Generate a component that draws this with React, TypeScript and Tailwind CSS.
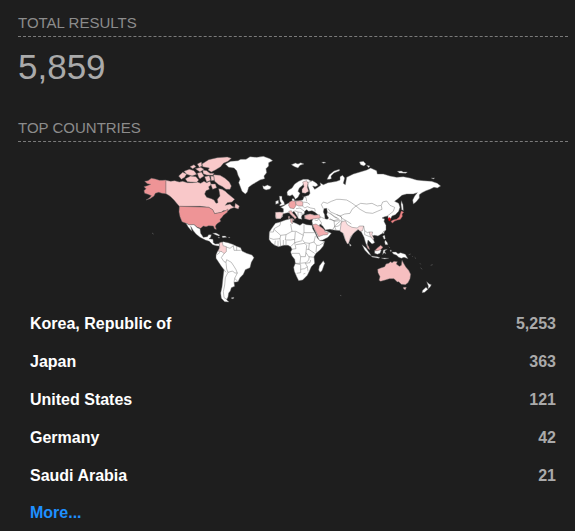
import React from "react";

interface CountryRow {
  name: string;
  count: number;
}

const TOTAL_RESULTS = 5859;

const countries: CountryRow[] = [
  { name: "Korea, Republic of", count: 5253 },
  { name: "Japan", count: 363 },
  { name: "United States", count: 121 },
  { name: "Germany", count: 42 },
  { name: "Saudi Arabia", count: 21 },
];

const SectionTitle: React.FC<{ children: React.ReactNode }> = ({ children }) => (
  <h2 className="border-b border-dashed border-[#7a7a7a] pb-0.5 text-[15px] leading-[22px] text-[#8c8c8c] uppercase">
    {children}
  </h2>
);

// Each group is drawn in its own local coordinates and moved into place
const WorldMap: React.FC = () => (
  <svg
    viewBox="0 0 918 465"
    className="mx-auto mt-2 block w-[306px] max-w-full"
    role="img"
    aria-label="Results by country"
    fill="#ffffff"
    stroke="#6a6a6a"
    strokeWidth="1.3"
    strokeLinejoin="round"
  >
    {/* North America */}
    <g>
      <path
        fill="#ee9496"
        d="M78 90L68 91 58 91 46 87 34 85 24 92 14 94 22 101 32 103 22 107 12 110 18 116 12 122 14 130 24 133 34 137 28 144 18 150 30 146 42 138 46 130 56 127 66 130 78 131Z"
      />
      <path
        fill="#f9c8c9"
        d="M78 91L92 94 104 92 118 96 128 94 142 98 158 98 172 96 182 100 192 94 200 98 210 94 214 104 206 110 208 118 198 122 194 132 200 142 214 146 222 150 228 160 234 158 232 148 240 138 238 126 236 116 246 118 256 124 262 130 272 138 284 148 276 156 262 158 256 166 270 162 276 168 284 172 272 176 264 182 250 182 244 187 224 191 218 179 206 172 180 169 118 169 110 160 102 150 92 140 86 136 78 131Z"
      />
      <path
        fill="#f9c8c9"
        d="M186 42L206 29 232 23 262 21 274 25 264 34 250 40 242 50 226 60 214 66 204 60 208 54 196 52 188 50ZM220 74L240 76 254 84 268 96 274 108 270 118 258 118 248 110 236 104 224 94ZM136 86L152 78 168 80 176 90 170 97 152 96 142 95ZM116 78L128 67 140 72 134 82 124 88ZM132 64L148 58 162 62 170 73 156 78 140 73ZM150 50L162 44 168 50 158 56ZM172 42L184 36 186 48 178 52ZM166 56L182 52 192 58 180 66ZM188 60L200 62 210 70 222 70 218 76 200 75 190 71ZM172 70L184 66 192 78 180 86 176 82ZM194 80L208 77 212 91 200 96ZM212 78L222 79 223 91 214 92ZM212 102L226 102 230 113 218 118Z"
      />
      <path fill="#f9c8c9" d="M286 160L298 168 295 177 284 173Z" />
      <path
        fill="#ee9496"
        d="M118 169L206 172 218 179 224 191 244 187 256 182 264 177 262 187 250 196 246 202 240 208 242 214 230 222 226 229 229 238 224 237 220 228 206 227 198 230 190 228 182 235 172 232 162 224 148 225 138 220 126 215 120 200 117 186Z"
      />
      <path d="M138 220L148 225 162 224 172 233 180 236 182 250 190 262 202 260 206 254 214 254 212 262 207 266 219 268 220 278 226 282 236 281 242 286 236 288 228 287 218 284 208 274 196 270 180 262 168 252 160 242 152 229 156 244 150 238 144 230Z" />
      <path d="M218 250L228 249 240 256 236 258 226 254ZM246 258L256 258 260 262 248 263ZM234 262L240 263 235 264ZM265 262L270 262 268 264Z" />
    </g>

    {/* Greenland and Iceland */}
    <g transform="translate(210 0)">
      <path d="M46 42L62 34 84 32 92 28 108 28 120 20 140 22 160 19 180 26 188 32 176 38 176 48 168 56 170 68 162 78 164 86 150 90 140 96 126 104 116 112 112 126 106 132 96 124 90 108 86 98 90 88 84 76 80 62 72 54 56 52Z" />
      <path d="M158 107L164 109 172 105 184 110 180 117 168 120 160 116Z" />
    </g>

    {/* Eurasian mainland */}
    <path d="M504 94L518 92 530 100 534 106 526 110 518 108 524 118 534 112 542 106 540 98 550 104 564 98 578 96 590 94 600 90 600 80 608 76 614 84 610 100 616 104 620 82 640 72 660 66 680 60 692 54 710 62 712 72 730 72 750 78 770 82 790 80 810 84 830 90 850 92 875 94 892 100 902 108 892 114 882 112 870 118 858 122 846 128 838 134 838 144 828 156 820 162 818 150 824 138 832 128 820 132 800 132 786 136 774 146 764 154 776 160 780 172 776 184 766 194 756 198 752 206 744 206 744 198 734 200 726 204 734 207 732 214 738 226 738 240 728 250 714 258 704 256 696 258 700 268 704 278 696 282 690 276 684 270 682 282 688 298 682 292 676 276 672 262 664 246 656 238 640 250 630 268 624 282 616 270 608 248 600 242 580 240 570 238 556 240 548 228 540 222 538 228 550 240 562 244 574 250 564 262 548 270 538 272 530 254 518 226 516 214 518 206 510 208 494 206 494 196 510 192 524 196 534 194 524 186 516 182 506 184 500 179 494 184 493 192 486 196 484 202 486 208 476 206 470 196 462 184 456 188 464 196 460 202 450 189 444 188 436 190 428 193 428 200 420 206 408 206 406 198 408 188 422 187 430 186 430 176 422 172 430 168 440 162 448 158 456 154 456 146 462 146 464 152 476 152 488 150 492 140 506 136 510 130 508 120 504 108Z" />

    {/* Europe */}
    <g transform="translate(390 0)">
      <path d="M60 138L52 136 51 126 56 120 66 114 74 102 86 94 100 88 114 88 124 94 112 98 104 97 98 106 88 114 84 124 90 130 84 142 76 148 72 140 67 134Z" />
      <path
        fill="#fbd3d4"
        d="M98 96L110 92 114 100 112 112 116 124 106 130 96 128 96 118 102 110Z"
      />
      <path d="M28 138L36 139 36 148 42 156 44 164 32 168 28 166 34 160 30 154ZM17 154L25 151 26 160 17 163Z" />
      <path d="M64 44L76 39 84 42 92 38 102 42 90 46 84 54 74 50ZM155 37L162 36 168 38 160 40Z" />
      <path d="M171 88L178 74 192 63 208 58 209 62 192 69 183 78 184 86 178 88Z" />
      <path fill="#f2a3a4" d="M58 156L66 152 76 154 78 166 72 176 60 174 56 166Z" />
      <path fill="#f7bebf" d="M77 154L90 152 99 156 98 168 86 168 78 164Z" />
      <path fill="#fbd6d7" d="M16 187L30 186 41 189 36 198 32 206 18 206Z" />
      <path
        fill="#f7bebf"
        d="M56 184L64 182 68 190 76 198 80 202 75 208 70 200 60 192ZM66 208L72 208 72 213ZM55 199L59 199 59 206 55 206Z"
      />
      <path fill="#f7b9ba" d="M104 197L120 192 134 196 148 194 151 204 134 206 118 210 106 206Z" />
      <path
        fill="none"
        d="M98 168L104 174 112 170 122 174 134 176 136 184 M100 156L112 158 120 164 M96 138L108 142 110 154 M78 176L90 174 98 180 104 184 M74 182L84 186 96 188 M84 186L84 200 M92 192L104 192"
      />
    </g>

    {/* Africa and the Middle East */}
    <g transform="translate(360 180)">
      <path d="M46 40L60 36 76 30 92 26 99 26 98 36 108 40 120 46 128 40 140 44 156 46 158 56 166 70 172 84 180 92 194 94 190 108 180 120 168 130 162 140 164 160 154 170 148 184 142 196 128 210 116 212 110 200 103 184 101 172 106 160 104 148 96 138 92 126 96 118 92 110 84 106 72 106 56 110 44 106 34 98 27 88 28 66 36 54Z" />
      <path d="M190 152L194 160 186 182 180 187 176 180 178 168Z" />
      <path fill="#f7b9ba" d="M92 26L98 26 97 42 92 36Z" />
      <path
        fill="#f4aeb0"
        d="M158 44L168 42 184 52 192 58 196 66 206 68 202 74 190 75 176 80 172 72 164 58Z"
      />
      <path
        fill="none"
        d="M28 66L40 66 42 56 60 46 62 36 M42 58L62 76 78 74 96 64 92 42 M96 64L108 64 130 76 130 68 M132 44L132 68 164 68 M62 76L60 86 40 88 28 84 M78 74L76 90 92 90 104 88 106 66 M130 76L126 88 134 98 148 100 162 96 166 78 M104 88L104 98 126 92 M60 86L62 108 M44 106L46 92 M54 108L54 92 M70 106L70 90 M78 106L78 92 M92 110L104 98 108 116 94 118 M108 104L134 100 140 106 138 126 136 140 122 140 118 130 96 130 M148 100L146 118 164 130 M162 96L170 106 178 106 194 96 M170 106L168 126 M140 118L148 118 M138 128L146 140 162 142 M122 140L120 160 104 160 M120 160L138 158 146 150 148 140 M104 160L122 164 122 188 110 190 M122 178L134 176 142 170 136 160 M142 170L144 184 M136 160L150 158 152 150 M130 192L136 190"
      />
      {/* Caspian Sea */}
      <path fill="#1e1e1e" d="M192 -4L200 -5 202 6 200 14 206 24 202 28 195 26 194 14 190 6Z" />
      <path
        fill="none"
        d="M176 26L184 38 184 48 M164 30L172 32 176 26 M206 27L222 32 224 50 228 60 M194 26L180 20 M202 6L218 16 232 24 M222 32L236 28 246 36 236 48 224 50"
      />
    </g>

    {/* Central and eastern Asia */}
    <g transform="translate(600 0)">
      <path
        fill="none"
        d="M-50 176L-56 164 -50 156 -38 160 -26 154 -10 148 0 148 20 150 34 158 48 168 62 160 80 162 96 160 112 168 124 166 128 156 140 153 150 166 164 172 160 184 150 192 142 198 M48 168L60 178 78 188 98 190 112 184 126 178 124 167 M48 168L36 178 30 190 14 192 0 198 -14 192 -28 186 -36 176 M0 198L8 206 22 214 34 222 M-30 188L-16 202 -4 206"
      />
      <path d="M184 152L189 164 190 182 185 178 183 164Z" />
      <path d="M58 36L70 34 78 42 72 48 62 44ZM80 46L90 48 86 53ZM172 64L184 63 190 66 202 66 198 70 178 69ZM274 84L284 84 280 87Z" />
      <path
        fill="#ee8485"
        stroke="#b86a6b"
        d="M153 214L160 210 170 208 178 201 182 189 184 183 191 187 186 192 187 199 181 208 172 210 164 213 157 219Z"
      />
      <path fill="#cf0a14" stroke="#cf0a14" d="M145 204L150 203 152 210 147 213Z" />
    </g>

    {/* South America */}
    <g transform="translate(180 225)">
      <path d="M58 54L70 50 84 53 98 58 110 64 122 68 126 78 140 85 156 90 162 98 154 112 150 128 136 134 130 148 120 158 114 170 102 172 104 184 94 188 91 198 86 204 84 216 80 224 87 231 74 230 64 220 62 204 66 186 68 168 70 150 72 134 64 124 56 112 48 100 48 90 52 80 58 72Z" />
      <path fill="#fbd3d4" d="M58 54L67 51 69 62 79 65 79 80 72 86 66 80 54 78 59 68Z" />
      <path
        fill="none"
        d="M79 66L90 70 100 62 M100 62L102 76 122 76 M110 64L110 76 M50 90L60 82 M72 86L64 98 72 110 78 112 80 104 94 112 102 124 108 134 112 144 104 144 98 138 84 142 80 132 78 112 M72 134L78 142 M84 142L76 158 74 180 70 200 72 218 82 224 M112 144L104 160 114 170 M104 160L102 172"
      />
      <path d="M94 218L102 217 100 221 95 221Z" />
    </g>

    {/* India, south-east Asia and Oceania */}
    <g transform="translate(570 150)">
      <path
        fill="#fcdcdd"
        d="M34 66L46 62 52 74 66 82 82 84 88 78 101 78 98 92 90 94 84 88 72 98 62 110 56 130 52 132 46 120 40 100 30 94Z"
      />
      <path d="M58 130L64 136 60 139Z" />
      <path fill="#fcdcdd" d="M118 96L128 96 126 104 132 116 128 118 120 106Z" />
      <path
        fill="none"
        d="M0 56L14 64 28 62 M6 92L16 76 30 64 M101 78L104 92 112 98 118 96 M104 92L104 104 114 108 124 112 M20 44L34 50 36 64"
      />
      <path d="M96 134L108 144 118 158 124 167 116 163 104 150ZM124 168L142 170 150 173 146 175 126 171ZM154 174L164 174 176 175 164 177ZM134 152L150 148 154 150 150 160 142 163 134 160ZM160 150L172 148 164 153 168 162 162 158 158 164ZM158 98L163 92 162 102ZM158 108L164 106 166 116 162 118ZM166 120L172 128 174 134 166 134 164 126ZM180 150L184 150 183 156ZM186 156L198 156 204 161 212 158 226 163 234 176 222 172 214 175 206 172 200 166 190 162Z" />
      <path
        fill="#f4aeb0"
        d="M110 132L116 140 119 149 113 145ZM134 152L142 144 152 136 159 142 152 149 142 152Z"
      />
      <path
        fill="#f6bfc0"
        d="M143 208L152 204 164 200 168 192 176 190 182 185 186 188 192 184 202 185 199 192 208 199 214 196 216 181 222 192 228 202 236 211 242 223 240 236 234 248 226 254 214 253 206 245 202 246 192 236 178 236 166 240 152 244 147 241 150 230 144 218ZM220 262L229 262 226 269 221 267Z"
      />
      <path d="M290 245L298 252 304 254 300 262 294 266 295 258ZM288 262L294 268 284 277 276 278 278 271Z" />
      <path
        stroke="#8a8a8a"
        d="M236 164L242 162M246 168L248 170M254 172L258 176M270 190L272 193M272 203L276 208M302 196L308 194M30 286L34 287M176 140L180 144"
      />
    </g>
    <path stroke="#8a8a8a" d="M36 249L39 251M40 252L42 252" />
  </svg>
);

export default function App() {
  return (
    <main className="min-h-screen bg-[#1e1e1e] pt-3 pr-[7px] pl-[18px] font-['Liberation_Sans',Arial,sans-serif]">
      <section>
        <SectionTitle>Total results</SectionTitle>
        <p className="text-[35px] leading-[60px] text-[#aaaaaa]">
          {TOTAL_RESULTS.toLocaleString("en-US")}
        </p>
      </section>

      <section className="mt-5">
        <SectionTitle>Top countries</SectionTitle>
        <WorldMap />
        <table className="w-full text-base font-bold">
          <tbody>
            {countries.map((country) => (
              <tr key={country.name} className="h-[38px]">
                <th scope="row" className="pl-3 text-left text-white">
                  {country.name}
                </th>
                <td className="pr-3 text-right text-[#aaaaaa]">
                  {country.count.toLocaleString("en-US")}
                </td>
              </tr>
            ))}
          </tbody>
        </table>
        <a href="#more" className="ml-3 block w-fit text-base leading-9 font-bold text-[#1e90ff]">
          More...
        </a>
      </section>
    </main>
  );
}
